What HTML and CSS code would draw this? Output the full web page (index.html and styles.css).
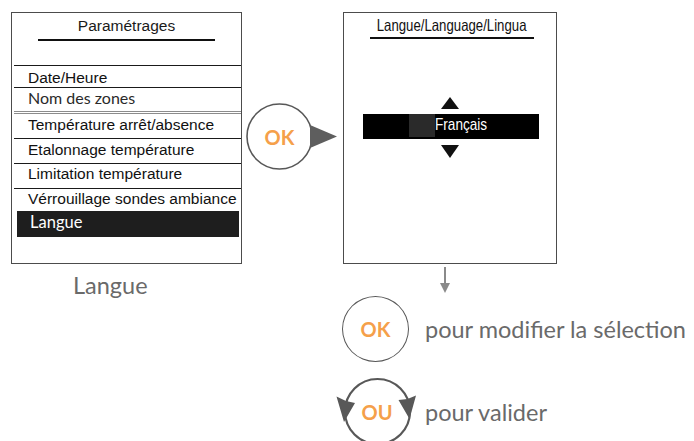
FILE: index.html
```html
<!DOCTYPE html>
<html lang="fr">
<head>
<meta charset="utf-8">
<title>Langue</title>
<link rel="stylesheet" href="styles.css">
</head>
<body>
<div class="page">
  <div class="top">
    <div class="screen screen-menu">
      <div class="menu-title"><span>Paramétrages</span><i class="rule"></i></div>
      <div class="row h22 pad3">Date/Heure</div>
      <div class="row h24 alt">Nom des zones</div>
      <div class="row h27 dbl pad2">Température arrêt/absence</div>
      <div class="row pad2">Etalonnage température</div>
      <div class="row">Limitation température</div>
      <div class="row h23">Vérrouillage sondes ambiance</div>
      <div class="row-selected">Langue</div>
    </div>
    <div class="connector">
      <svg class="stack" width="101" height="70" viewBox="0 0 101 70">
        <circle cx="37.5" cy="34.5" r="32.5" fill="none" stroke="#585858" stroke-width="1.6"/>
        <polygon points="68,23 95,34.5 68,46" fill="#5e5e5e"/>
      </svg>
      <span class="stack ok-label">OK</span>
    </div>
    <div class="screen screen-lang">
      <div class="lang-title"><span class="narrow">Langue/Language/Lingua</span></div>
      <i class="lang-rule"></i>
      <i class="tri-up"></i>
      <div class="lang-bar"><i class="cursor"></i><span class="narrow narrow-left">Français</span></div>
      <i class="tri-down"></i>
    </div>
  </div>
  <div class="bottom">
    <div class="caption">Langue</div>
    <div class="steps">
      <svg class="arrow-down" width="12" height="26" viewBox="0 0 12 26">
        <line x1="6" y1="0" x2="6" y2="18" stroke="#8a8a8a" stroke-width="2"/>
        <polygon points="1,16 11,16 6,26" fill="#8a8a8a"/>
      </svg>
      <div class="step step-ok">
        <div class="btn-ok">OK</div>
        <span class="step-text">pour modifier la sélection</span>
      </div>
      <div class="step step-ou">
        <div class="btn-ou">
          <svg class="stack" width="84" height="70" viewBox="0 0 84 70">
            <circle cx="42.5" cy="35.5" r="32.5" fill="none" stroke="#585858" stroke-width="2.2"/>
            <polygon points="1.5,20.5 11,25 20,27 9,46" fill="#585858"/>
            <polygon points="63.5,24 72.5,23 81,19.5 74.5,43" fill="#585858"/>
          </svg>
          <span class="stack ou-label">OU</span>
        </div>
        <span class="step-text">pour valider</span>
      </div>
    </div>
  </div>
</div>
</body>
</html>
```
FILE: styles.css
```css
html, body {
  margin: 0;
  padding: 0;
  background: #ffffff;
}
body {
  width: 694px;
  height: 441px;
  overflow: hidden;
  font-family: "Liberation Sans", Arial, sans-serif;
  color: #111;
}
.page {
  padding: 12px 0 0 11px;
}
.top {
  display: flex;
  align-items: flex-start;
}
.screen {
  box-sizing: border-box;
  height: 252px;
  border: 1px solid #4c4c4c;
  background: #fff;
}

/* ---- left menu screen ---- */
.screen-menu {
  width: 231px;
  display: flex;
  flex-direction: column;
}
.menu-title {
  box-sizing: border-box;
  height: 52px;
  padding-top: 4px;
  display: flex;
  flex-direction: column;
  align-items: center;
  font-size: 15.5px;
  line-height: 18px;
  color: #1a1a1a;
}
.rule {
  display: block;
  width: 177px;
  height: 2px;
  margin-top: 4px;
  background: #111;
}
.row {
  box-sizing: border-box;
  height: 25px;
  margin-left: 2px;
  padding-left: 14px;
  padding-top: 1px;
  border-top: 1px solid #1a1a1a;
  font-size: 15.5px;
  line-height: 17px;
  color: #111;
  white-space: nowrap;
}
.h22 { height: 22px; }
.h23 { height: 23px; }
.h24 { height: 24px; }
.h27 { height: 27px; }
.pad2 { padding-top: 2px; }
.pad3 { padding-top: 3px; }
.dbl {
  border-top: 3px double #8c8c8c;
}
.alt {
  font-family: Lato, "Noto Sans", sans-serif;
  font-size: 16px;
  color: #2a2a2a;
}
.row-selected {
  height: 26px;
  margin: 0 2px 0 5px;
  padding-left: 13px;
  background: #1e1e1e;
  color: #fff;
  font-family: Lato, "Noto Sans", sans-serif;
  font-size: 16.5px;
  line-height: 23px;
}

/* ---- connector ---- */
.connector {
  width: 101px;
  margin-top: 90px;
  display: grid;
}
.stack {
  grid-area: 1 / 1;
}
.ok-label {
  width: 75px;
  height: 69px;
  display: flex;
  align-items: center;
  justify-content: center;
  font-family: Lato, "Noto Sans", sans-serif;
  font-weight: 700;
  font-size: 20px;
  color: #f5a04a;
}

/* ---- language screen ---- */
.screen-lang {
  width: 214px;
  display: flex;
  flex-direction: column;
  align-items: center;
}
.narrow {
  display: inline-block;
  transform: scaleX(0.8);
  white-space: nowrap;
}
.narrow-left {
  transform-origin: left center;
}
.lang-title {
  margin-top: 3px;
  margin-left: 4px;
  font-size: 16.5px;
  line-height: 19px;
  color: #111;
  white-space: nowrap;
}
.lang-rule {
  display: block;
  width: 164px;
  height: 2px;
  margin-top: 2px;
  margin-left: 3px;
  background: #111;
}
.tri-up {
  display: block;
  width: 0;
  height: 0;
  margin-top: 58px;
  border-left: 9px solid transparent;
  border-right: 9px solid transparent;
  border-bottom: 12px solid #111;
}
.lang-bar {
  box-sizing: border-box;
  width: 176px;
  height: 25px;
  margin-top: 5px;
  margin-left: 2px;
  padding-left: 46px;
  background: #000;
  display: flex;
  align-items: flex-start;
  color: #fff;
  font-size: 17px;
  line-height: 22px;
}
.cursor {
  display: block;
  width: 26px;
  height: 23px;
  background: #2a2a2a;
}
.tri-down {
  display: block;
  width: 0;
  height: 0;
  margin-top: 6px;
  border-left: 9px solid transparent;
  border-right: 9px solid transparent;
  border-top: 13px solid #111;
}

/* ---- bottom ---- */
.bottom {
  display: flex;
  align-items: flex-start;
}
.caption {
  box-sizing: border-box;
  width: 324px;
  padding-left: 62px;
  margin-top: 7px;
  font-family: Lato, "Noto Sans", sans-serif;
  font-size: 23.5px;
  line-height: 28px;
  color: #6a6a6a;
}
.steps {
  display: flex;
  flex-direction: column;
  align-items: flex-start;
}
.arrow-down {
  display: block;
  margin-top: 3px;
  margin-left: 104px;
}
.step {
  display: flex;
  align-items: center;
}
.step-text {
  font-family: Lato, "Noto Sans", sans-serif;
  font-size: 23.5px;
  line-height: 26px;
  color: #6a6a6a;
  white-space: nowrap;
}
.step-ok {
  margin-top: 3px;
  margin-left: 7px;
  gap: 16px;
}
.btn-ok {
  box-sizing: border-box;
  width: 67px;
  height: 66px;
  border: 1.6px solid #585858;
  border-radius: 50%;
  display: flex;
  align-items: center;
  justify-content: center;
  font-family: Lato, "Noto Sans", sans-serif;
  font-weight: 700;
  font-size: 20px;
  color: #f5a04a;
}
.step-ou {
  margin-top: 14px;
  gap: 6px;
}
.btn-ou {
  display: grid;
}
.ou-label {
  width: 84px;
  height: 72px;
  display: flex;
  align-items: center;
  justify-content: center;
  font-family: Lato, "Noto Sans", sans-serif;
  font-weight: 700;
  font-size: 20px;
  color: #f5a04a;
}
```
